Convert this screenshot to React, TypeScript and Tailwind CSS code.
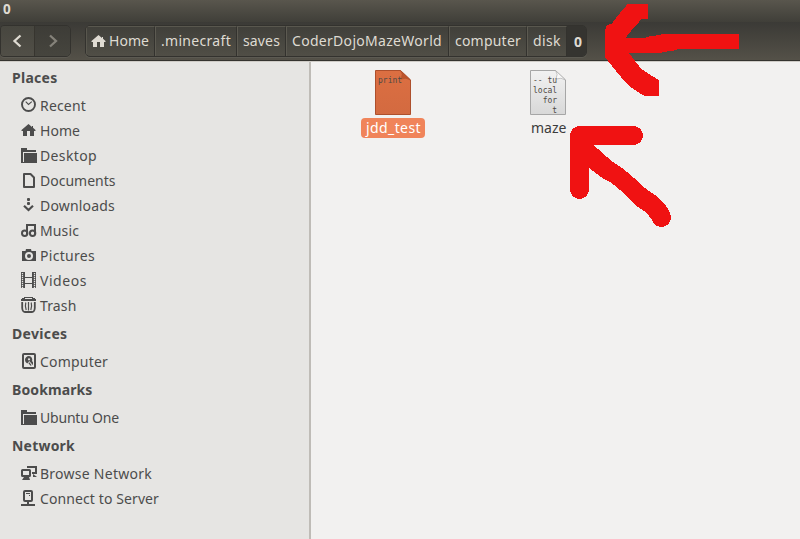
import { useLayoutEffect, useRef, useState, type ReactNode } from "react";

/** Single line of text, tracked so that it takes exactly `w` pixels. */
function Fit({ w, children, className = "" }: { w: number; children: string; className?: string }) {
  const ref = useRef<HTMLSpanElement>(null);
  const [spacing, setSpacing] = useState(0);
  useLayoutEffect(() => {
    const el = ref.current;
    if (!el) return;
    el.style.letterSpacing = "0px";
    setSpacing((w - el.getBoundingClientRect().width) / children.length);
  }, [w, children]);
  return (
    <span ref={ref} className={`inline-block whitespace-pre ${className}`} style={{ letterSpacing: `${spacing}px` }}>
      {children}
    </span>
  );
}

function Icon({ children, className = "" }: { children: ReactNode; className?: string }) {
  return (
    <svg viewBox="0 0 16 16" className={`h-4 w-4 shrink-0 ${className}`} fill="currentColor">
      {children}
    </svg>
  );
}

const line = { fill: "none", stroke: "currentColor" };
const homeShape = <path d="M7.5 2L.5 8V9H2V14H6V9H9V14H13V9H14.5V8L12 5.8V4H11V5Z" />;
const folderShape = (
  <>
    <path d="M0 1H6V3H15V5H2V15H0Z" />
    <path d="M3 6H16V16H3Z" />
    <path d="M0 15H3V16H0Z" />
    <path d="M2 5H3V15H2Z" fill="#e6e5e3" />
  </>
);

const icons: Record<string, ReactNode> = {
  recent: (
    <>
      <circle cx="7.5" cy="7.5" r="6.5" {...line} strokeWidth="1.9" />
      <path d="M4.7 4.7L7.5 7.5L10.8 4.7" {...line} strokeWidth="1.1" />
    </>
  ),
  home: homeShape,
  folder: folderShape,
  document: <path d="M3 2H9.5L13 5.5V15H3Z" {...line} strokeWidth="2" strokeLinejoin="round" />,
  downloads: (
    <>
      <rect x="6" y="1" width="3" height="3" rx="1" />
      <rect x="6" y="5" width="3" height="3" rx="1" />
      <path d="M3 8.8L7.5 13L12 8.8" {...line} strokeWidth="2.2" />
    </>
  ),
  music: (
    <>
      <path d="M5 2H15V12H13V4H7V12H5Z" />
      <circle cx="3.7" cy="11.3" r="2.7" {...line} strokeWidth="2" />
      <circle cx="11.6" cy="11.3" r="2.7" {...line} strokeWidth="2" />
    </>
  ),
  pictures: (
    <>
      <path d="M1 4H4.5L5 2H10L10.5 4H15V14H1Z" />
      <circle cx="8" cy="9" r="3" fill="none" stroke="#e6e5e3" strokeWidth="2" />
    </>
  ),
  videos: (
    <>
      <path d="M0 0H4V16H0ZM11 0H15V16H11ZM4 5H11V6H4ZM4 11H11V12H4Z" />
      <path d="M1.5 1V16M13.5 1V16" stroke="#e6e5e3" strokeWidth="1.3" strokeDasharray="1.3 .7" fill="none" />
    </>
  ),
  trash: (
    <>
      <path d="M3 0H12V1H14V2H15V4H0V2H1V1H3Z" />
      <path d="M4 1.5H11" stroke="#e6e5e3" fill="none" />
      <path d="M1.2 5V11Q1.5 15 4 15H11Q13.5 15 13.8 11V5" {...line} strokeWidth="1.8" />
      <path d="M4.8 5.5Q3.8 9 5.2 13M7.5 5V13.5M10.2 5.5Q11.2 9 9.8 13" {...line} strokeWidth="1.2" />
    </>
  ),
  disk: (
    <>
      <rect x="2" y="1" width="12" height="14" rx="1" {...line} strokeWidth="2" />
      <path d="M8 3A4 3.8 0 0 0 4 7Q4 9.5 6.3 10.5L8.3 8L12 12.2V9.5Q12 8.5 11 8.2A3.8 3.8 0 0 0 8 3Z" />
      <circle cx="8" cy="6.3" r="1.1" fill="#e6e5e3" />
      <path d="M7.3 10L9.5 12.7L10.7 12.3L8.3 9.3Z" />
    </>
  ),
  network: (
    <>
      <path d="M6 1H16V9H11V7H14V3H6Z" />
      <path d="M12 9L16 12H12Z" />
      <rect x="1" y="5" width="8" height="6" rx=".5" {...line} strokeWidth="2" />
      <path d="M3 12H8L9 15H1Z" />
    </>
  ),
  server: (
    <>
      <rect x="3" y="1" width="8" height="10" rx="1" {...line} strokeWidth="2" />
      <path d="M5 3H9V4H5ZM8 5H9V6H8ZM6 11H8V14H14V16H0V14H6Z" />
    </>
  ),
};

type Item = [icon: string, label: string, width: number];
const sections: { title: string; width: number; items: Item[] }[] = [
  {
    title: "Places",
    width: 45.5,
    items: [
      ["recent", "Recent", 46],
      ["home", "Home", 40],
      ["folder", "Desktop", 57],
      ["document", "Documents", 75.5],
      ["downloads", "Downloads", 75],
      ["music", "Music", 39],
      ["pictures", "Pictures", 55],
      ["videos", "Videos", 47],
      ["trash", "Trash", 36.5],
    ],
  },
  { title: "Devices", width: 55.5, items: [["disk", "Computer", 68]] },
  { title: "Bookmarks", width: 80.5, items: [["folder", "Ubuntu One", 79]] },
  {
    title: "Network",
    width: 63,
    items: [
      ["network", "Browse Network", 112],
      ["server", "Connect to Server", 119],
    ],
  },
];

const crumbs = [
  { label: ".minecraft", text: 70, box: "w-[82px] pl-[5px]" },
  { label: "saves", text: 37, box: "w-[49px] pl-[5px]" },
  { label: "CoderDojoMazeWorld", text: 150, box: "w-[163px] pl-[5px]" },
  { label: "computer", text: 66, box: "w-[78px] pl-[5px]" },
  { label: "disk", text: 28, box: "w-[40px] pl-[5px]" },
];

function Toolbar() {
  return (
    <div className="flex h-[39px] border-b border-[#35332f] bg-gradient-to-b from-[#3b3a36] to-[#545148] pt-[3px] text-[#dfdbd2]">
      <div className="flex h-8 w-[71px] overflow-hidden rounded-r-[5px] rounded-l-[4px] border border-[#33322e] shadow-[0_1px_0_#5c5a52]">
        <div className="flex w-[34px] items-center justify-center border-r border-[#37352f] bg-gradient-to-b from-[#47463f] to-[#514f47]">
          <Icon className="-translate-x-px">
            <path d="M11.5 2.5L5.5 8L11.5 13.5" {...line} strokeWidth="2.3" />
          </Icon>
        </div>
        <div className="flex flex-1 items-center justify-center bg-gradient-to-b from-[#3d3c37] to-[#46453e] text-[#85827a]">
          <Icon>
            <path d="M5 2.5L11 8L5 13.5" {...line} strokeWidth="2.3" />
          </Icon>
        </div>
      </div>
      <div className="ml-[14px] flex h-8 w-[502px] overflow-hidden rounded-[5px] border border-[#33322e] bg-gradient-to-b from-[#403f3a] to-[#504e46] shadow-[0_1px_0_#5c5a52]">
        <div className="flex w-[69px] items-center border-t border-r border-l border-t-[#59574e] border-r-[#33322e] border-l-[#59574e] pb-px pl-[4px]">
          <Icon>{homeShape}</Icon>
          <Fit w={40} className="ml-[2px]">Home</Fit>
        </div>
        {crumbs.map((c) => (
          <div
            key={c.label}
            className={`flex shrink-0 items-center border-t border-r border-l border-t-[#59574e] border-r-[#33322e] border-l-[#5c5a51] pb-px ${c.box}`}
          >
            <Fit w={c.text}>{c.label}</Fit>
          </div>
        ))}
        <div className="flex flex-1 items-center justify-center bg-[#353430] pt-px pl-[3px] font-bold">0</div>
      </div>
    </div>
  );
}

function Sidebar() {
  return (
    <aside className="w-[311px] shrink-0 border-r-2 border-[#bfbcb7] bg-[#e6e5e3] text-[#4c4c4c]">
      {sections.map((s) => (
        <section key={s.title}>
          <div className="flex h-[31px] items-center pl-3 font-bold">
            <Fit w={s.width}>{s.title}</Fit>
          </div>
          {s.items.map(([icon, label, w]) => (
            <div key={label} className="flex h-[25px] gap-[3px] pt-1 pl-[21px]">
              <Icon>{icons[icon]}</Icon>
              <Fit w={w} className="leading-[18px]">{label}</Fit>
            </div>
          ))}
        </section>
      ))}
    </aside>
  );
}

function FileIcon({ id, selected, text }: { id: string; selected?: boolean; text: string }) {
  const [top, bottom, edge, fold] = selected
    ? ["#dc6f42", "#d36a40", "#ad4f2c", "#bd542c"]
    : ["#f2f2f2", "#d8d8d8", "#a6a6a6", "#f8f8f8"];
  return (
    <div className="relative h-[46px] w-9">
      <svg viewBox="0 0 36 46" className="h-[46px] w-9">
        <defs>
          <linearGradient id={id} x2="0" y2="1">
            <stop stopColor={top} />
            <stop offset="1" stopColor={bottom} />
          </linearGradient>
        </defs>
        <path d="M.5 .5H25.5L35.5 10V44.5H.5Z" fill={`url(#${id})`} stroke={edge} />
        <path d="M25.5 .5Q28.5 4 26 9Q31 7 35.5 10Z" fill={fold} stroke={edge} strokeWidth=".6" />
      </svg>
      <pre className="absolute top-[6px] left-[3px] font-['DejaVu_Sans_Mono',monospace] text-[8px] leading-[10px] text-[#4f4a45]">
        {text}
      </pre>
    </div>
  );
}

function Arrows() {
  return (
    <svg viewBox="0 0 800 539" className="pointer-events-none absolute inset-0 h-[539px] w-[800px]" fill="#f01212" shapeRendering="crispEdges">
      <path d="M627.7 4H648V19H641.7L631 31L625.7 37.7H645L650 36L659 35.3L661.7 34H739V49.3H677L673 51L665 51.7L660.7 53H629L635 61L641.7 69.3L650 74.7L659 80V96H644.3L631.7 87.7L623.3 79.7L614 68.7L605.3 57.3L605 32.3L606 26L612 23.3L618.3 15Z" />
      <path d="M633.5 135.5H579.5V189.5" fill="none" stroke="#f01212" strokeWidth="19" strokeLinecap="round" strokeLinejoin="round" />
      <path d="M580 132L593.7 145L604 154.5L613 162L620 166.5L629 173.5L646.7 189.5L655 195L665 204L669 211A9.7 9.7 0 0 1 654 223L646.7 212.7L635 205L620 190L611.7 183L603 178.5L589 168L574 155Z" />
      <circle cx="661.3" cy="217.3" r="9.7" />
    </svg>
  );
}

export default function App() {
  return (
    <div className="relative flex h-[539px] w-[800px] flex-col overflow-hidden bg-[#f2f1f0] font-['Noto_Sans','Open_Sans',sans-serif] text-[14px] leading-[18px]">
      <div className="h-[22px] bg-gradient-to-b from-[#59564d] to-[#403f39] pl-[3px] text-[13.5px] leading-[18px] font-bold text-[#dfdbd2]">0</div>
      <Toolbar />
      <div className="flex min-h-0 flex-1 border-t border-[#cfccc7]">
        <Sidebar />
        <main className="flex flex-1 pt-2 text-[#3c3c3c]">
          <div className="ml-[50px] flex w-[64px] flex-col items-center">
            <FileIcon id="page-selected" selected text="print" />
            <div className="mt-[2px] h-5 w-[64px] rounded-[4px] bg-[#f0845a] pl-[5px] leading-[19px] text-white">
              <Fit w={55}>jdd_test</Fit>
            </div>
          </div>
          <div className="ml-[105px] w-[40px]">
            <FileIcon id="page-plain" text={"-- tu\nlocal\n  for\n    t"} />
            <div className="mt-[2px] pl-px leading-[19px]">
              <Fit w={35.5}>maze</Fit>
            </div>
          </div>
        </main>
      </div>
      <Arrows />
    </div>
  );
}
